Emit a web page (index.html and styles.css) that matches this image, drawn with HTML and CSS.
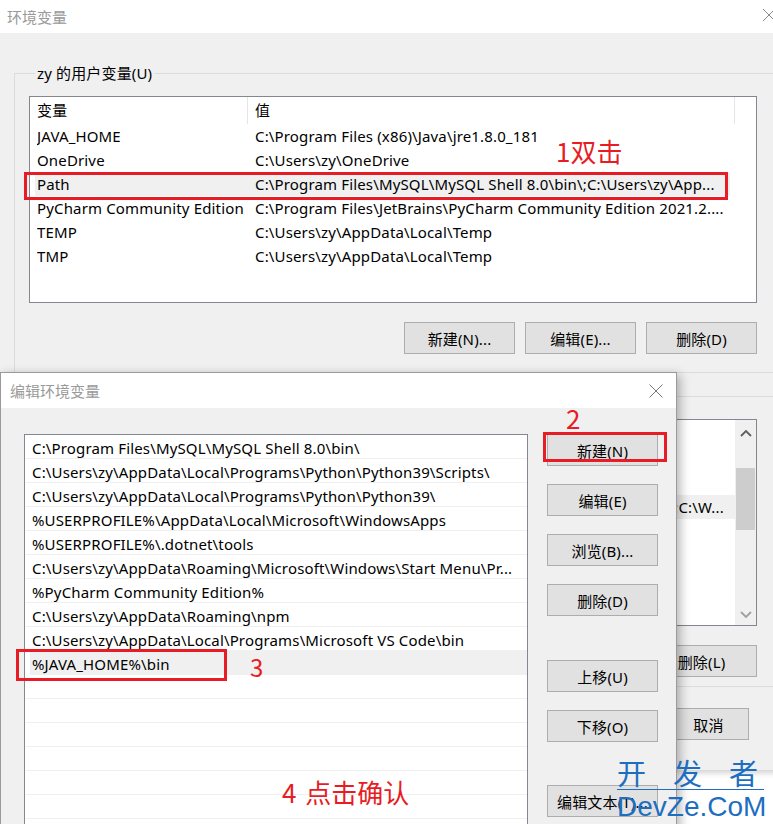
FILE: index.html
```html
<!DOCTYPE html>
<html lang="zh-CN">
<head>
<meta charset="utf-8">
<title>环境变量</title>
<link rel="stylesheet" href="styles.css">
</head>
<body>
<div class="screen">
  <div class="win">
    <div class="titlebar">
      <span class="title">环境变量</span>
      <svg class="close bg-close" width="14" height="14" viewBox="0 0 14 14"><path d="M1 1 L13 13 M13 1 L1 13" stroke="#8a8a8a" stroke-width="1" fill="none"/></svg>
    </div>
    <div class="winbody">
      <fieldset class="group user">
        <legend>zy 的用户变量(U)</legend>
        <div class="inner">
          <div class="listview">
            <div class="lv-head">
              <div class="lv-hcell c1">变量</div>
              <div class="lv-hcell c2">值</div>
            </div>
            <div class="lv-row"><span>JAVA_HOME</span><span>C:\Program Files (x86)\Java\jre1.8.0_181</span></div>
            <div class="lv-row"><span>OneDrive</span><span>C:\Users\zy\OneDrive</span></div>
            <div class="lv-row sel"><span>Path</span><span>C:\Program Files\MySQL\MySQL Shell 8.0\bin\;C:\Users\zy\App...</span></div>
            <div class="lv-row"><span>PyCharm Community Edition</span><span>C:\Program Files\JetBrains\PyCharm Community Edition 2021.2....</span></div>
            <div class="lv-row"><span>TEMP</span><span>C:\Users\zy\AppData\Local\Temp</span></div>
            <div class="lv-row"><span>TMP</span><span>C:\Users\zy\AppData\Local\Temp</span></div>
          </div>
          <div class="btnrow">
            <button class="btn">新建(N)...</button>
            <button class="btn">编辑(E)...</button>
            <button class="btn">删除(D)</button>
          </div>
        </div>
      </fieldset>
      <fieldset class="group sys">
        <legend>系统变量(S)</legend>
        <div class="inner">
          <div class="listview sys-list">
            <div class="sys-rows">
              <div class="lv-head">
                <div class="lv-hcell c1">变量</div>
                <div class="lv-hcell c2">值</div>
              </div>
              <div class="lv-row"><span>NUMBER_OF_PROCESSORS</span><span>8</span></div>
              <div class="lv-row"><span>OS</span><span>Windows_NT</span></div>
              <div class="lv-row sel"><span>Path</span><span>C:\Program Files (x86)\Common Files\Oracle\Java\javapath;C:\W...</span></div>
              <div class="lv-row"><span>PATHEXT</span><span>.COM;.EXE;.BAT;.CMD;.VBS;.VBE;.JS;.JSE;.WSF;.WSH;.MSC</span></div>
            </div>
            <div class="scrollbar">
              <svg class="sb-arrow" width="12" height="8" viewBox="0 0 12 8"><path d="M1 7 L6 2 L11 7" stroke="#606060" stroke-width="1.8" fill="none"/></svg>
              <div class="sb-track"><div class="sb-thumb"></div></div>
              <svg class="sb-arrow" width="12" height="8" viewBox="0 0 12 8"><path d="M1 1 L6 6 L11 1" stroke="#a0a0a0" stroke-width="1.8" fill="none"/></svg>
            </div>
          </div>
          <div class="btnrow">
            <button class="btn">新建(W)...</button>
            <button class="btn">编辑(I)...</button>
            <button class="btn">删除(L)</button>
          </div>
        </div>
      </fieldset>
      <div class="okrow">
        <button class="btn small">确定</button>
        <button class="btn small">取消</button>
      </div>
    </div>
  </div>

  <div class="dialog">
    <div class="dlg-title">
      <span class="title">编辑环境变量</span>
      <svg class="close" width="14" height="14" viewBox="0 0 14 14"><path d="M0.5 0.5 L13.5 13.5 M13.5 0.5 L0.5 13.5" stroke="#777" stroke-width="1" fill="none"/></svg>
    </div>
    <div class="dlg-body">
      <div class="pathlist">
        <div class="pl-row">C:\Program Files\MySQL\MySQL Shell 8.0\bin\</div>
        <div class="pl-row">C:\Users\zy\AppData\Local\Programs\Python\Python39\Scripts\</div>
        <div class="pl-row">C:\Users\zy\AppData\Local\Programs\Python\Python39\</div>
        <div class="pl-row">%USERPROFILE%\AppData\Local\Microsoft\WindowsApps</div>
        <div class="pl-row">%USERPROFILE%\.dotnet\tools</div>
        <div class="pl-row">C:\Users\zy\AppData\Roaming\Microsoft\Windows\Start Menu\Pr...</div>
        <div class="pl-row">%PyCharm Community Edition%</div>
        <div class="pl-row">C:\Users\zy\AppData\Roaming\npm</div>
        <div class="pl-row">C:\Users\zy\AppData\Local\Programs\Microsoft VS Code\bin</div>
        <div class="pl-row sel">%JAVA_HOME%\bin</div>
        <div class="pl-row"></div>
        <div class="pl-row"></div>
        <div class="pl-row"></div>
        <div class="pl-row"></div>
        <div class="pl-row"></div>
        <div class="pl-row"></div>
        <div class="pl-row"></div>
      </div>
      <div class="dlg-btns">
        <button class="btn dbtn">新建(N)</button>
        <button class="btn dbtn">编辑(E)</button>
        <button class="btn dbtn">浏览(B)...</button>
        <button class="btn dbtn">删除(D)</button>
        <button class="btn dbtn gap1">上移(U)</button>
        <button class="btn dbtn">下移(O)</button>
        <button class="btn dbtn gap2">编辑文本(T)...</button>
      </div>
    </div>
  </div>

  <div class="mark box1"></div>
  <div class="note n1">1双击</div>
  <div class="mark box2"></div>
  <div class="note n2">2</div>
  <div class="mark box3"></div>
  <div class="note n3">3</div>
  <div class="note n4">4 点击确认</div>

  <div class="watermark">
    <div class="wm-cn">开发者</div>
    <div class="wm-en">DevZe.CoM</div>
  </div>
</div>
</body>
</html>
```
FILE: styles.css
```css
* { box-sizing: border-box; }
html, body { margin: 0; padding: 0; }
body {
  background: #ffffff;
  font-family: "Noto Sans", "Noto Sans CJK SC", sans-serif;
  font-size: 15px;
  letter-spacing: 0.15px;
  color: #000;
}
.screen {
  position: relative;
  width: 773px;
  height: 824px;
  overflow: hidden;
  background: #ffffff;
}

/* background window */
.win {
  width: 800px;
  height: 770px;
  background: #f0f0f0;
  box-shadow: 0 3px 6px rgba(0,0,0,0.18);
  display: flex;
  flex-direction: column;
}
.titlebar {
  height: 33px;
  background: #fff;
  display: flex;
  align-items: center;
  padding-left: 7px;
  flex-shrink: 0;
}
.title {
  color: #9a9a9a;
  font-family: "Noto Sans CJK SC", sans-serif;
  font-size: 15px;
  letter-spacing: 0;
}
.bg-close { margin-left: auto; margin-right: 24px; margin-top: -4px; }

.winbody {
  padding: 30px 0 0 14px;
  display: flex;
  flex-direction: column;
}
.group {
  margin: 0;
  border: 1px solid #dcdcdc;
  padding: 0 0 0 14px;
  width: 780px;
  min-width: 0;
}
.group legend {
  padding: 0 2px;
  margin-left: 6px;
  line-height: 20px;
  font-size: 15px;
}
.group.user { height: 310px; }
.group.sys { margin-top: 13px; height: 301px; }
.inner {
  width: 728px;
  padding-top: 13px;
  display: flex;
  flex-direction: column;
}

.listview {
  width: 728px;
  height: 207px;
  background: #fff;
  border: 1px solid #828790;
  padding-left: 5px;
}
.lv-head {
  display: flex;
  height: 27px;
  width: 700px;
  border-right: 1px solid #e5e5e5;
}
.lv-hcell {
  line-height: 27px;
  padding-left: 2px;
}
.lv-hcell.c1 { width: 213px; border-right: 1px solid #e5e5e5; }
.lv-hcell.c2 { padding-left: 7px; }
.lv-row {
  display: grid;
  grid-template-columns: 218px 1fr;
  height: 24px;
  line-height: 24px;
  width: 695px;
  padding-left: 2px;
  white-space: nowrap;
  overflow: hidden;
}
.lv-row span { overflow: hidden; }
.lv-row.sel { background: #f0f0f0; }

.btnrow {
  display: flex;
  justify-content: flex-end;
  gap: 10px;
  margin-top: 19px;
}
.btn {
  font-family: "Noto Sans", "Noto Sans CJK SC", sans-serif;
  font-size: 15px;
  letter-spacing: 0.15px;
  color: #000;
  background: #e1e1e1;
  border: 1px solid #adadad;
  height: 32px;
  width: 111px;
  padding: 0;
  margin: 0;
}

.sys-list {
  display: flex;
  padding-left: 0;
}
.sys-rows {
  flex: 1;
  padding-left: 5px;
  overflow: hidden;
}
.sys-rows .lv-head { width: 701px; }
.sys-rows .lv-row { width: 701px; }
.scrollbar {
  width: 21px;
  background: #f0f0f0;
  display: flex;
  flex-direction: column;
  align-items: center;
  padding: 9px 0 6px;
}
.sb-arrow { flex-shrink: 0; }
.sb-track { flex: 1; width: 100%; padding: 31px 1px 0; }
.sb-thumb { height: 62px; background: #cdcdcd; }

.okrow {
  display: flex;
  justify-content: flex-end;
  gap: 10px;
  width: 735px;
  margin-top: 21px;
}
.btn.small { width: 81px; }

/* dialog */
.dialog {
  position: absolute;
  left: 0;
  top: 372px;
  width: 677px;
  height: 470px;
  border: 1px solid #9a9a9a;
  background: #f0f0f0;
  box-shadow: 3px 3px 10px rgba(0,0,0,0.3);
}
.dlg-title {
  height: 35px;
  background: #fff;
  display: flex;
  align-items: center;
  padding-left: 9px;
}
.dlg-title .close { margin-left: auto; margin-right: 13px; }
.dlg-body {
  display: flex;
  align-items: flex-start;
  gap: 19px;
  padding: 26px 0 0 23px;
}
.pathlist {
  width: 504px;
  height: 420px;
  background: #fff;
  border: 1px solid #828790;
  overflow: hidden;
}
.pl-row {
  height: 24px;
  line-height: 20px;
  padding-top: 3px;
  margin-left: 1px;
  padding-left: 6px;
  border-bottom: 1px solid #f0f0f0;
  white-space: nowrap;
  overflow: hidden;
}
.pl-row.sel {
  background: #f0f0f0;
  margin-left: 5px;
  padding-left: 2px;
}
.dlg-btns {
  display: flex;
  flex-direction: column;
  gap: 18px;
  width: 111px;
}
.dbtn { width: 111px; }
.dbtn.gap1 { margin-top: 26px; }
.dbtn.gap2 { margin-top: 25px; }

/* annotations */
.mark {
  position: absolute;
  border: 3px solid #e81c24;
}
.box1 { left: 24px; top: 172px; width: 704px; height: 28px; }
.box2 { left: 543px; top: 432px; width: 124px; height: 30px; }
.box3 { left: 16px; top: 649px; width: 211px; height: 32px; }
.note {
  position: absolute;
  color: #e81c24;
  font-family: "Noto Sans CJK SC", sans-serif;
  font-size: 26px;
  letter-spacing: 0;
  line-height: 1;
  white-space: nowrap;
}
.n1 { left: 556px; top: 138px; }
.n2 { left: 566px; top: 405px; }
.n3 { left: 250px; top: 655px; font-size: 24px; }
.n4 { left: 282px; top: 779px; word-spacing: 3px; }

.watermark {
  position: absolute;
  left: 617px;
  top: 756px;
  width: 147px;
  color: #1e6ec0;
  letter-spacing: 0;
}
.wm-cn {
  font-family: "Noto Sans CJK SC", sans-serif;
  font-size: 29px;
  line-height: 33px;
  letter-spacing: 27px;
  border-bottom: 1px solid #1e6ec0;
  white-space: nowrap;
}
.wm-en {
  font-family: "Liberation Sans", sans-serif;
  font-size: 28px;
  line-height: 34px;
  white-space: nowrap;
}
```
